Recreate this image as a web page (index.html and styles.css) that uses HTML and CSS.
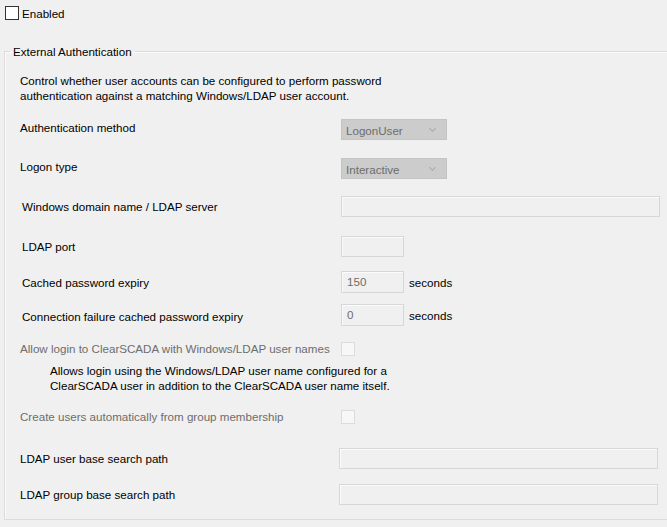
FILE: index.html
```html
<!DOCTYPE html>
<html lang="en">
  <head>
    <meta charset="UTF-8" />
    <title>External Authentication</title>
    <link rel="stylesheet" href="styles.css">
  </head>
  <body>
    <div class="enabled">
      <span class="check check-dark"></span>
      <span>Enabled</span>
    </div>

    <fieldset class="group">
      <legend>External Authentication</legend>

      <p class="intro">
        Control whether user accounts can be configured to perform password<br />
        authentication against a matching Windows/LDAP user account.
      </p>

      <div class="row row-method">
        <label class="label raised">Authentication method</label>
        <div class="select">LogonUser<span class="arrow"></span></div>
      </div>

      <div class="row row-logon">
        <label class="label raised">Logon type</label>
        <div class="select">Interactive<span class="arrow"></span></div>
      </div>

      <div class="row row-domain indent">
        <label class="label">Windows domain name / LDAP server</label>
        <div class="field wide"></div>
      </div>

      <div class="row row-port indent">
        <label class="label">LDAP port</label>
        <div class="field short"></div>
      </div>

      <div class="row row-cached indent">
        <label class="label">Cached password expiry</label>
        <div class="field short">150</div>
        <span class="unit">seconds</span>
      </div>

      <div class="row row-conn indent">
        <label class="label lowered">Connection failure cached password expiry</label>
        <div class="field short">0</div>
        <span class="unit">seconds</span>
      </div>

      <div class="row row-allow">
        <label class="label disabled">Allow login to ClearSCADA with Windows/LDAP user names</label>
        <span class="check"></span>
      </div>
      <p class="note">
        Allows login using the Windows/LDAP user name configured for a<br />
        ClearSCADA user in addition to the ClearSCADA user name itself.
      </p>

      <div class="row row-create">
        <label class="label disabled">Create users automatically from group membership</label>
        <span class="check"></span>
      </div>

      <div class="row row-user">
        <label class="label narrow">LDAP user base search path</label>
        <div class="field wide"></div>
      </div>

      <div class="row row-groupbase">
        <label class="label narrow">LDAP group base search path</label>
        <div class="field wide"></div>
      </div>
    </fieldset>
  </body>
</html>
```

FILE: styles.css
```css
body {
  margin: 0;
  width: 667px;
  height: 527px;
  overflow: hidden;
  background-color: #f0f0f0;
  font-family: "Liberation Sans", Arial, sans-serif;
  font-size: 11.6px;
  color: #000;
}

.enabled {
  display: flex;
  align-items: center;
  gap: 3px;
  padding: 5px 0 0 5px;
  height: 16px;
  line-height: 15px;
}

.check {
  display: inline-block;
  box-sizing: border-box;
  width: 14px;
  height: 14px;
  border: 1px solid #dcdcdc;
  background-color: #f7f7f7;
}

.check-dark {
  border-color: #333;
  background-color: #fff;
}

.group {
  margin: 23px 0 0 4px;
  padding: 0 0 14px 0;
  height: 460px;
  border: none;
  border-top: 1px solid #dcdcdc;
  border-left: 1px solid #dcdcdc;
  border-bottom: 1px solid #dcdcdc;
  box-shadow: inset 1px 1px 0 #fafafa;
}

.group legend {
  margin-left: 5px;
  padding: 0 3px;
  line-height: 15px;
}

.intro {
  margin: 14px 0 0 15px;
  line-height: 15px;
}

.row {
  display: flex;
  align-items: center;
  height: 21px;
  padding-left: 15px;
}

.row.indent {
  padding-left: 17px;
}

.label {
  width: 321px;
  flex-shrink: 0;
}

.label.raised {
  margin-bottom: 4px;
}

.label.lowered {
  margin-top: 3px;
}

.row.indent .label {
  width: 319px;
}

.label.narrow {
  width: 319px;
}

.disabled {
  color: #6d6d6d;
}

.row-method { margin-top: 16px; }
.row-logon { margin-top: 18px; }
.row-domain { margin-top: 17px; }
.row-port { margin-top: 19px; }
.row-cached { margin-top: 14px; height: 22px; }
.row-conn { margin-top: 11px; height: 22px; }
.row-allow { margin-top: 12px; }
.row-create { margin-top: 13px; }
.row-user { margin-top: 21px; }
.row-groupbase { margin-top: 15px; }

.select {
  position: relative;
  box-sizing: border-box;
  width: 106px;
  height: 21px;
  padding: 0 4px;
  line-height: 21px;
  background-color: #cccccc;
  border: 1px solid #c4c4c4;
  color: #6d6d6d;
}

.arrow {
  position: absolute;
  right: 11px;
  top: 6px;
  width: 4px;
  height: 4px;
  border-right: 1px solid #ababab;
  border-bottom: 1px solid #ababab;
  transform: rotate(45deg);
}

.field {
  box-sizing: border-box;
  height: 100%;
  padding: 0 5px;
  line-height: 20px;
  border: 1px solid #d7d7d7;
  background-color: #f0f0f0;
  color: #6d6d6d;
  box-shadow: inset 1px 1px 0 #fbfbfb;
}

.field.short {
  width: 63px;
}

.field.wide {
  width: 319px;
}

.unit {
  margin-left: 5px;
}

.note {
  margin: 4px 0 0 45px;
  line-height: 15px;
}

p {
  margin: 0;
}
```
